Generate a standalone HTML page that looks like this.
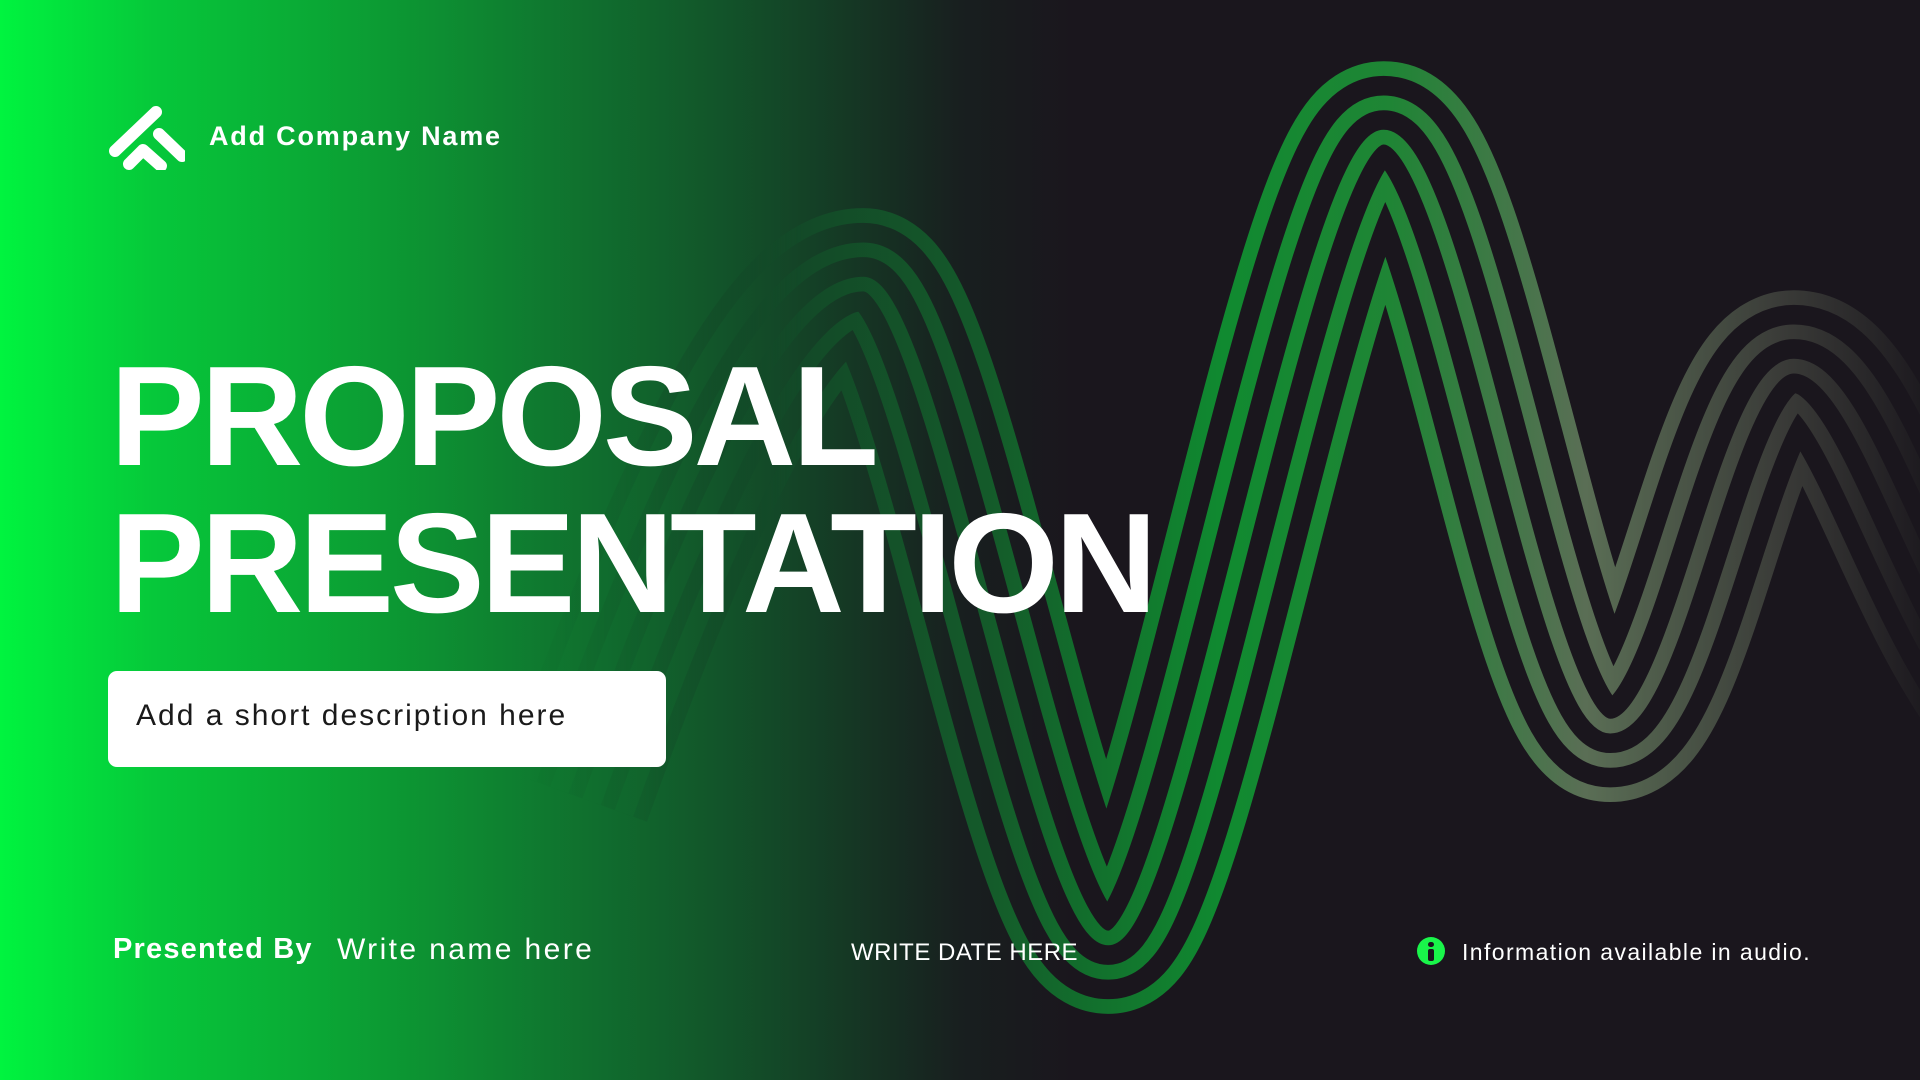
<!DOCTYPE html>
<html><head><meta charset="utf-8"><style>
html,body{margin:0;padding:0}
body{width:1920px;height:1080px;position:relative;overflow:hidden;font-family:"Liberation Sans",sans-serif;color:#fff;
background:linear-gradient(90deg,#00f43f 0%,#06c83a 8%,#0c9a33 20%,#106e2e 31%,#134a28 40%,#181f1f 50%,#1a161d 56%,#1a161d 100%);}
.t{position:absolute;white-space:nowrap}
svg{position:absolute;left:0;top:0}
</style></head><body>
<svg width="1920" height="1080" viewBox="0 0 1568 882">
<defs>
<linearGradient id="g" gradientUnits="userSpaceOnUse" x1="430" y1="0" x2="1568" y2="0">
<stop offset="0" stop-color="#134a28" stop-opacity="0"/>
<stop offset="0.08" stop-color="#134a28" stop-opacity="0.2"/>
<stop offset="0.2" stop-color="#134a28"/>
<stop offset="0.33" stop-color="#145a2a"/>
<stop offset="0.5" stop-color="#108a30"/>
<stop offset="0.62" stop-color="#1f8535"/>
<stop offset="0.76" stop-color="#5a6e55"/>
<stop offset="0.9" stop-color="#3a3b38"/>
<stop offset="1" stop-color="#1e1b20"/>
</linearGradient>
<linearGradient id="v" gradientUnits="userSpaceOnUse" x1="0" y1="0" x2="1568" y2="0">
<stop offset="0.3" stop-color="#000"/>
<stop offset="0.4" stop-color="#fff"/>
</linearGradient>
<path id="p" d="M 470 650 C 560 400, 640 232, 705 232 C 760 232, 850 766, 905 766 C 960 766, 1070 112, 1130 112 C 1190 112, 1260 593, 1315 593 C 1370 593, 1410 299, 1465 299 C 1520 299, 1560 480, 1640 580"/>
<mask id="m" maskUnits="userSpaceOnUse" x="0" y="0" width="1568" height="882">
<g fill="none" stroke-linejoin="round">
<use href="#p" stroke="#fff" stroke-width="124"/>
<use href="#p" stroke="#000" stroke-width="100"/>
<use href="#p" stroke="#fff" stroke-width="68"/>
<use href="#p" stroke="#000" stroke-width="44"/>
<use href="#p" stroke="#fff" stroke-width="12"/>
</g>
</mask>
</defs>
<rect x="0" y="0" width="1568" height="882" fill="url(#g)" mask="url(#m)"/>
</svg>
<svg width="80" height="70" viewBox="105 100 80 70" style="left:105px;top:100px">
<g stroke="#fff" stroke-width="12" stroke-linecap="round" fill="none">
<line x1="115" y1="151" x2="156" y2="112"/>
<line x1="159" y1="134" x2="182" y2="156"/>
<polyline points="129,164 143,150 161,166" stroke-linejoin="round"/>
</g>
</svg>
<div class="t" style="left:209px;top:123px;font-size:27px;line-height:27px;font-weight:bold;letter-spacing:1.8px">Add Company Name</div>
<div class="t" style="left:110px;top:343px;font-size:142px;line-height:147px;font-weight:bold;letter-spacing:-4px">PROPOSAL<br>PRESENTATION</div>
<div style="position:absolute;left:108px;top:671px;width:558px;height:96px;background:#fff;border-radius:9px"></div>
<div class="t" style="left:136px;top:701px;font-size:30px;line-height:30px;color:#1a1a1a;letter-spacing:2px">Add a short description here</div>
<div class="t" style="left:113px;top:935px;font-size:29px;line-height:29px;font-weight:bold;letter-spacing:1.2px">Presented By</div>
<div class="t" style="left:337px;top:935px;font-size:30px;line-height:30px;letter-spacing:2.4px">Write name here</div>
<div class="t" style="left:851px;top:941px;font-size:24px;line-height:24px;letter-spacing:0.5px">WRITE DATE HERE</div>
<div style="position:absolute;left:1417px;top:937px;width:28px;height:28px;border-radius:50%;background:#19f54a"></div>
<div style="position:absolute;left:1428px;top:942px;width:6px;height:5px;border-radius:3px;background:#1a161d"></div>
<div style="position:absolute;left:1428px;top:949px;width:6px;height:12px;border-radius:2px;background:#1a161d"></div>
<div class="t" style="left:1462px;top:941px;font-size:23px;line-height:23px;letter-spacing:1.4px">Information available in audio.</div>
</body></html>
